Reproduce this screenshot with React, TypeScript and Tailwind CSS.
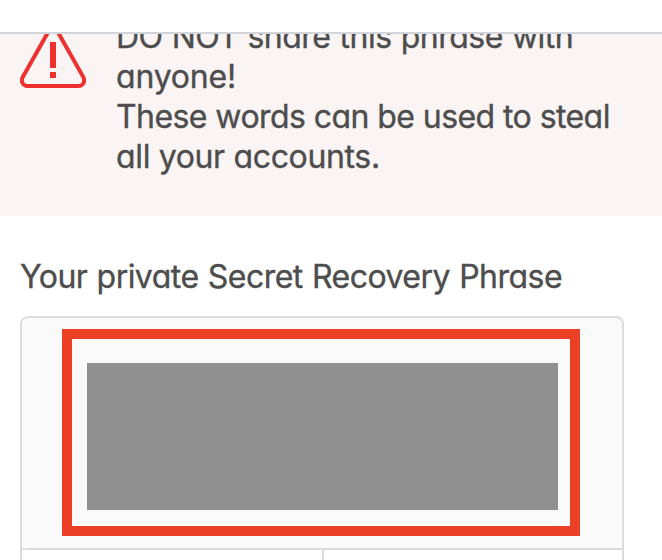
const warning = [
  { text: "DO NOT share this phrase with", spacing: "tracking-[-0.51px] [word-spacing:0.6px]" },
  { text: "anyone!", spacing: "tracking-[-0.2px]" },
  { text: "These words can be used to steal", spacing: "tracking-[-0.57px]" },
  { text: "all your accounts.", spacing: "tracking-[-0.35px]" },
];

function WarningIcon() {
  return (
    <svg className="mt-2.5 h-16 w-[66px] shrink-0" viewBox="0 0 66 64" fill="none">
      <path
        d="M27.9 6.5 2.8 50.9C0.6 55 2.6 60 7.5 60H58.5C63.4 60 65.4 55 63.2 50.9L38.1 6.5C35.8 2.2 30.2 2.2 27.9 6.5Z"
        stroke="#ee302f"
        strokeWidth="4"
      />
      <path d="M30 16h6v26h-6zM30 46h6v6h-6z" fill="#ee302f" />
    </svg>
  );
}

export default function App() {
  return (
    <div className="h-[560px] w-[662px] overflow-hidden bg-white font-['Inter',sans-serif] text-[32px] leading-10 font-normal text-[#4d4d4d] [-webkit-text-stroke:0.35px_#4d4d4d] [font-feature-settings:'cv11']">
      <header className="h-[34px] border-b-2 border-[#d2d6db]" />
      <section className="h-[182px] overflow-hidden bg-[#faf4f4] pl-5">
        <div className="-mt-[18px] flex gap-[30px]">
          <WarningIcon />
          <div className="pt-px">
            {warning.map((line) => (
              <p key={line.text} className={`whitespace-nowrap ${line.spacing}`}>
                {line.text}
              </p>
            ))}
          </div>
        </div>
      </section>
      <main className="px-5 pt-[41px]">
        <h1 className="whitespace-nowrap tracking-[-0.53px] [word-spacing:0.8px]">Your private Secret Recovery Phrase</h1>
        <div className="mt-[19px] h-[300px] w-[604px] rounded-lg border-2 border-[#dcdcdc]">
          <div className="h-[230px] rounded-lg bg-[#fafafa] pt-[11px] pl-10">
            <div className="h-[207px] w-[518px] border-10 border-[#eb4026] pt-6 pl-[15px]">
              <div className="h-[147px] w-[471px] bg-[#909090]" />
            </div>
          </div>
          <div className="flex h-[60px] border-t-2 border-[#dcdcdc]">
            <div className="w-[302px] border-r-2 border-[#dcdcdc]" />
          </div>
        </div>
      </main>
    </div>
  );
}
